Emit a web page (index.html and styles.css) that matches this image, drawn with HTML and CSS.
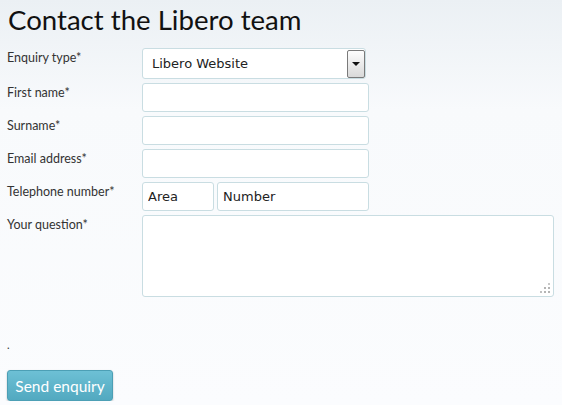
FILE: index.html
```html
<!DOCTYPE html>
<html>
  <head>
    <link rel="stylesheet" href="styles.css">
  </head>
  <body>
    <h1 class="title">Contact the Libero team</h1>

    <form class="enquiry" action="" method="">
      <div class="row">
        <label for="type">Enquiry type*</label>
        <div class="select">
          <select id="type" name="type">
            <option>Libero Website</option>
          </select>
          <span class="arrow"></span>
        </div>
      </div>
      <div class="row">
        <label for="first">First name*</label>
        <input type="text" id="first" name="first">
      </div>
      <div class="row">
        <label for="surname">Surname*</label>
        <input type="text" id="surname" name="surname">
      </div>
      <div class="row">
        <label for="email">Email address*</label>
        <input type="email" id="email" name="email">
      </div>
      <div class="row">
        <label for="area">Telephone number*</label>
        <div class="phone">
          <input type="text" id="area" class="area" name="area" placeholder="Area">
          <input type="text" id="number" class="number" name="number" placeholder="Number">
        </div>
      </div>
      <div class="row">
        <label for="question">Your question*</label>
        <div class="question">
          <textarea id="question" name="question"></textarea>
          <span class="grip"></span>
        </div>
      </div>

      <p class="note">.</p>

      <button type="submit" class="send">Send enquiry</button>
    </form>
  </body>
</html>
```

FILE: styles.css
```css
html{
  min-height:100%;
  background:linear-gradient(#ebf0f4 0, #f8fafc 110px, #fbfcfe 100%);
}

body{
  margin:0;
  padding:0 7px;
  font-family:Lato, "Open Sans", sans-serif;
  color:#333;
}

.title{
  margin:0;
  padding:2px 0 0 1px;
  font-size:27.6px;
  font-weight:400;
  line-height:35px;
  color:#111;
  height:46px;
}

.row{
  display:grid;
  grid-template-columns:135px 1fr;
  margin-bottom:4px;
}

label{
  font-size:12.5px;
  line-height:18px;
  padding-top:1px;
  color:#333;
}

input,
select,
textarea{
  box-sizing:border-box;
  font-family:"DejaVu Sans", sans-serif;
  font-size:13px;
  color:#222;
  background:#fff;
  border:1px solid #c9dde2;
  border-radius:3px;
}

input:focus,
select:focus,
textarea:focus{
  outline:none;
}

input{
  width:227px;
  height:29px;
  padding:0 5px;
}

input::placeholder{
  color:#222;
}

.select{
  position:relative;
  width:224px;
  height:31px;
}

select{
  -webkit-appearance:none;
  appearance:none;
  width:100%;
  height:100%;
  padding:0 9px;
}

.arrow{
  position:absolute;
  top:2px;
  right:1px;
  width:16px;
  height:26px;
  border:1px solid #7a7a7a;
  border-radius:2px;
  background:linear-gradient(#fdfdfd, #d9d9d9);
  pointer-events:none;
}

.arrow:after{
  content:'';
  position:absolute;
  left:4px;
  top:11px;
  border-left:4px solid transparent;
  border-right:4px solid transparent;
  border-top:4px solid #111;
}

.phone{
  display:flex;
  gap:3px;
}

.area{
  width:72px;
}

.number{
  width:152px;
}

.question{
  position:relative;
  width:412px;
  height:82px;
}

textarea{
  display:block;
  width:100%;
  height:100%;
  padding:4px 5px;
  resize:none;
}

/* dotted resize grip */
.grip{
  position:absolute;
  right:4px;
  bottom:4px;
  width:2px;
  height:2px;
  background:#b4b4b4;
  box-shadow:0 -4px #b4b4b4, 0 -8px #c8c8c8, -4px 0 #b4b4b4, -4px -4px #b4b4b4, -8px 0 #c0c0c0;
  pointer-events:none;
}

.note{
  margin:41px 0 0;
  font-size:11px;
  line-height:14px;
  color:#333;
}

.send{
  margin-top:18px;
  width:106px;
  height:31px;
  padding:0;
  font-family:Lato, sans-serif;
  font-size:15.5px;
  color:#fff;
  background:linear-gradient(#6dc0d5, #52a9c0);
  border:1px solid #4c9fb5;
  border-radius:3px;
  box-shadow:0 1px 2px rgba(0,0,0,0.25);
  cursor:pointer;
}
```
